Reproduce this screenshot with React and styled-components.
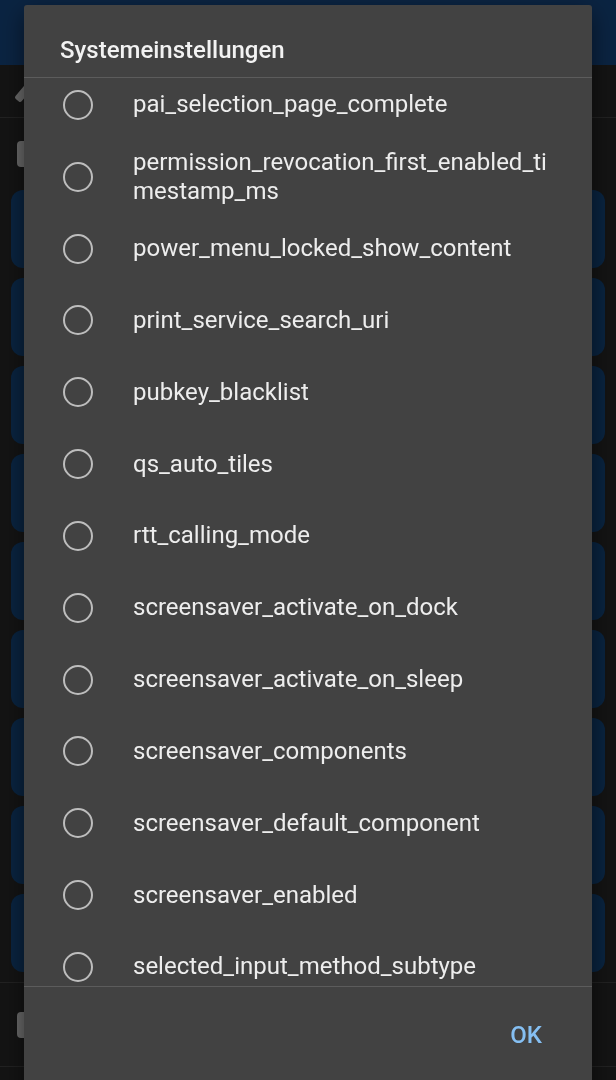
import React, { useLayoutEffect, useRef } from 'react';
import styled, { createGlobalStyle } from 'styled-components';

const GlobalStyle = createGlobalStyle`
    html, body {
        margin: 0;
        padding: 0;
        background: #141414;
        font-family: Roboto, "Noto Sans", "Liberation Sans", sans-serif;
        overflow: hidden;
    }
`;

const settings = [
    'pai_selection_page_complete',
    'permission_revocation_first_enabled_timestamp_ms',
    'power_menu_locked_show_content',
    'print_service_search_uri',
    'pubkey_blacklist',
    'qs_auto_tiles',
    'rtt_calling_mode',
    'screensaver_activate_on_dock',
    'screensaver_activate_on_sleep',
    'screensaver_components',
    'screensaver_default_component',
    'screensaver_enabled',
    'selected_input_method_subtype',
];

export default function App() {
    const listRef = useRef(null);

    useLayoutEffect(() => {
        if (listRef.current) listRef.current.scrollTop = 9;
    }, []);

    return (
        <>
            <GlobalStyle />
            <Page>
                <AppBar />
                <ToolRow>
                    <PencilIcon />
                </ToolRow>
                <Rule />
                <CheckRow>
                    <SquareIcon />
                </CheckRow>
                <Cards>
                    {Array.from({ length: 9 }).map((_, i) => (
                        <Card key={i} />
                    ))}
                </Cards>
                <Rule $top={10} />
                <CheckRow $height={83}>
                    <SquareIcon />
                </CheckRow>
                <Rule />
            </Page>

            <Dialog>
                <Title>Systemeinstellungen</Title>
                <Divider />
                <List ref={listRef}>
                    {settings.map((name) => (
                        <Item key={name}>
                            <Radio />
                            <Label>{name}</Label>
                        </Item>
                    ))}
                </List>
                <Divider />
                <Footer>
                    <OkButton>OK</OkButton>
                </Footer>
            </Dialog>
        </>
    );
}

const Page = styled.div`
    display: flex;
    flex-direction: column;
    width: 616px;
    height: 1080px;
    background: #141414;
`;

const AppBar = styled.div`
    height: 65px;
    background: #0b2442;
`;

const ToolRow = styled.div`
    height: 52px;
    display: flex;
    align-items: center;
    padding-left: 15px;
`;

const PencilIcon = styled.div`
    width: 8px;
    height: 24px;
    margin-left: 6px;
    background: #6a6a6a;
    border-radius: 2px;
    transform: rotate(40deg);
`;

const Rule = styled.div`
    height: 1px;
    margin-top: ${(p) => p.$top || 0}px;
    background: #222;
`;

const CheckRow = styled.div`
    height: ${(p) => p.$height || 72}px;
    display: flex;
    align-items: center;
    padding-left: 17px;
`;

const SquareIcon = styled.div`
    width: 26px;
    height: 26px;
    border-radius: 4px;
    background: #6a6a6a;
`;

const Cards = styled.div`
    display: flex;
    flex-direction: column;
    gap: 10px;
    padding: 0 11px;
`;

const Card = styled.div`
    height: 78px;
    border-radius: 12px;
    background: #0a2440;
`;

const Dialog = styled.div`
    position: fixed;
    left: 24px;
    top: 5px;
    width: 568px;
    height: 1100px;
    display: flex;
    flex-direction: column;
    background: #424242;
    border-radius: 3px;
    box-shadow: 0 8px 24px rgba(0, 0, 0, 0.5);
`;

const Title = styled.h2`
    margin: 0;
    height: 72px;
    display: flex;
    align-items: center;
    padding: 0 36px;
    padding-top: 18px;
    box-sizing: border-box;
    font-size: 24px;
    font-weight: 500;
    color: #f2f2f2;
`;

const Divider = styled.div`
    height: 1px;
    background: #5c5c5c;
    flex-shrink: 0;
`;

const List = styled.div`
    height: 908px;
    flex-shrink: 0;
    overflow: hidden;
`;

const Item = styled.div`
    height: 71.83px;
    display: flex;
    align-items: center;
    padding-left: 39px;
    padding-right: 37px;
    box-sizing: border-box;
`;

const Radio = styled.div`
    width: 30px;
    height: 30px;
    flex-shrink: 0;
    box-sizing: border-box;
    border: 2.6px solid #bdbdbd;
    border-radius: 50%;
    margin-right: 40px;
`;

const Label = styled.div`
    font-size: 24px;
    line-height: 29px;
    color: #ededed;
    word-break: break-all;
`;

const Footer = styled.div`
    display: flex;
    justify-content: flex-end;
    padding: 24px 34px 0 0;
`;

const OkButton = styled.button`
    background: none;
    border: none;
    padding: 0 16px;
    height: 48px;
    font-family: Roboto, "Noto Sans", sans-serif;
    font-size: 24px;
    font-weight: 500;
    color: #85bff2;
    cursor: pointer;
`;
